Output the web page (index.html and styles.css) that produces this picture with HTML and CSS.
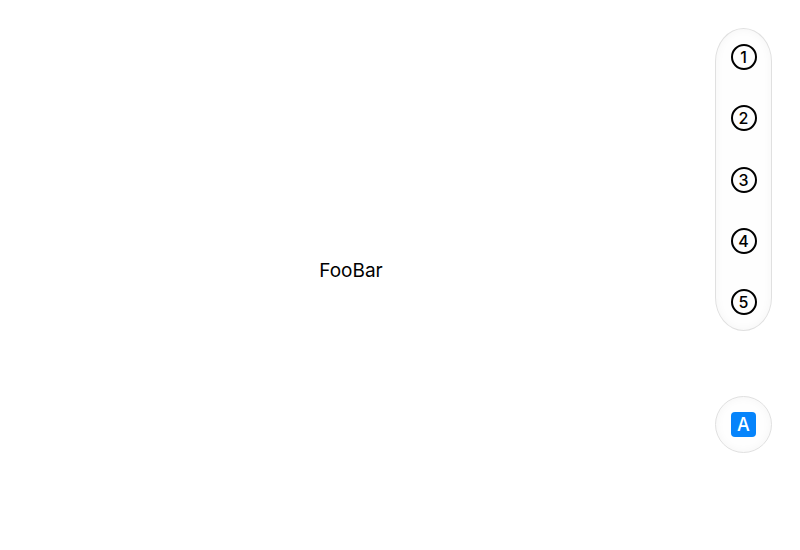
FILE: index.html
```html
<!DOCTYPE html>
<html lang="en">
<head>
  <meta charset="UTF-8">
  <meta name="viewport" content="width=device-width, initial-scale=1.0">
  <title>FooBar</title>
  <link rel="stylesheet" href="styles.css">
</head>
<body>
  <div class="container">
    <main class="content">FooBar</main>
    <aside class="sidebar">
      <nav class="dock">
        <div class="step">1</div>
        <div class="step">2</div>
        <div class="step">3</div>
        <div class="step">4</div>
        <div class="step">5</div>
      </nav>
      <div class="avatar-button">
        <div class="avatar">A</div>
      </div>
    </aside>
  </div>
</body>
</html>
```

FILE: styles.css
```css
body {
  font-family: Inter, "Liberation Sans", sans-serif;
  background-color: #fff;
  color: #000;
  margin: 0;
  padding: 0;
}
.container {
  display: flex;
  height: 550px;
}
.content {
  flex: 1;
  display: flex;
  justify-content: center;
  align-items: center;
  padding-bottom: 10px;
  font-size: 19px;
}
.sidebar {
  box-sizing: border-box;
  width: 98px;
  padding: 28px 28px 0 13px;
  display: flex;
  flex-direction: column;
  gap: 65px;
}
.dock {
  box-sizing: border-box;
  height: 303px;
  padding: 15px 0;
  border: 1px solid #e0e0e0;
  border-radius: 29px / 34px;
  background-color: #fefefe;
  box-shadow: inset 0 0 10px rgba(0, 0, 0, 0.04);
  display: flex;
  flex-direction: column;
  justify-content: space-between;
  align-items: center;
}
.step {
  box-sizing: border-box;
  width: 26px;
  height: 26px;
  border: 2.3px solid #000;
  border-radius: 50%;
  display: flex;
  justify-content: center;
  align-items: center;
  font-size: 16px;
  font-weight: 500;
}
.avatar-button {
  box-sizing: border-box;
  height: 57px;
  border: 1px solid #e0e0e0;
  border-radius: 50%;
  background-color: #fefefe;
  box-shadow: inset 0 0 10px rgba(0, 0, 0, 0.04);
  display: flex;
  justify-content: center;
  align-items: center;
}
.avatar {
  width: 25px;
  height: 25px;
  border-radius: 4px;
  background-color: #0684fb;
  color: #fff;
  display: flex;
  justify-content: center;
  align-items: center;
  font-size: 18px;
  font-weight: 500;
}
```
